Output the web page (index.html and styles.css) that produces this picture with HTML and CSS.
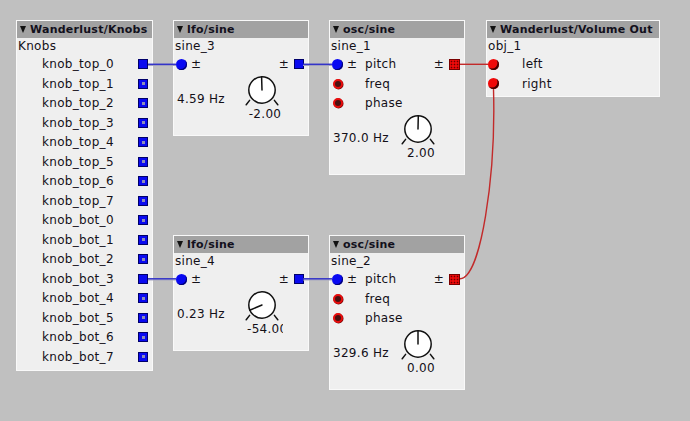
FILE: index.html
```html
<!DOCTYPE html>
<html>
<head>
<meta charset="utf-8">
<link rel="stylesheet" href="styles.css">
</head>
<body>
<div class="canvas">

  <div class="module m-knobs">
    <div class="header"><span class="tri"></span>Wanderlust/Knobs</div>
    <div class="name">Knobs</div>
    <div class="row orow"><span>knob_top_0</span><span class="sq blue"></span></div>
    <div class="row orow"><span>knob_top_1</span><span class="sq blue open"></span></div>
    <div class="row orow"><span>knob_top_2</span><span class="sq blue open"></span></div>
    <div class="row orow"><span>knob_top_3</span><span class="sq blue open"></span></div>
    <div class="row orow"><span>knob_top_4</span><span class="sq blue open"></span></div>
    <div class="row orow"><span>knob_top_5</span><span class="sq blue open"></span></div>
    <div class="row orow"><span>knob_top_6</span><span class="sq blue open"></span></div>
    <div class="row orow"><span>knob_top_7</span><span class="sq blue open"></span></div>
    <div class="row orow"><span>knob_bot_0</span><span class="sq blue open"></span></div>
    <div class="row orow"><span>knob_bot_1</span><span class="sq blue open"></span></div>
    <div class="row orow"><span>knob_bot_2</span><span class="sq blue open"></span></div>
    <div class="row orow"><span>knob_bot_3</span><span class="sq blue"></span></div>
    <div class="row orow"><span>knob_bot_4</span><span class="sq blue open"></span></div>
    <div class="row orow"><span>knob_bot_5</span><span class="sq blue open"></span></div>
    <div class="row orow"><span>knob_bot_6</span><span class="sq blue open"></span></div>
    <div class="row orow"><span>knob_bot_7</span><span class="sq blue open"></span></div>
  </div>

  <div class="module m-lfo1">
    <div class="header"><span class="tri"></span>lfo/sine</div>
    <div class="name">sine_3</div>
    <div class="row io">
      <span class="slot"><span class="dot blue"></span></span><span class="pm">±</span>
      <span class="lbl"></span>
      <span class="pm out">±</span><span class="sq blue"></span>
    </div>
    <div class="ctrl">
      <span class="clabel">4.59 Hz</span>
      <div class="kcol">
        <svg class="knob" width="30" height="32" viewBox="0 0 30 32">
          <line x1="2.6" y1="26.4" x2="-0.8" y2="30.8"/>
          <line x1="27.4" y1="26.4" x2="30.8" y2="30.8"/>
          <circle cx="15" cy="16" r="13.2"/>
          <line x1="15" y1="16" x2="14.6" y2="3"/>
        </svg>
        <div class="val">-2.00</div>
      </div>
    </div>
  </div>

  <div class="module m-osc1">
    <div class="header"><span class="tri"></span>osc/sine</div>
    <div class="name">sine_1</div>
    <div class="row io">
      <span class="slot"><span class="dot blue"></span></span><span class="pm">±</span>
      <span class="lbl">pitch</span>
      <span class="pm out">±</span><span class="sq red"></span>
    </div>
    <div class="row io">
      <span class="slot"><span class="ring"></span></span><span class="pm"></span>
      <span class="lbl">freq</span>
    </div>
    <div class="row io">
      <span class="slot"><span class="ring"></span></span><span class="pm"></span>
      <span class="lbl">phase</span>
    </div>
    <div class="ctrl">
      <span class="clabel">370.0 Hz</span>
      <div class="kcol">
        <svg class="knob" width="30" height="32" viewBox="0 0 30 32">
          <line x1="2.6" y1="26.4" x2="-0.8" y2="30.8"/>
          <line x1="27.4" y1="26.4" x2="30.8" y2="30.8"/>
          <circle cx="15" cy="16" r="13.2"/>
          <line x1="15" y1="16" x2="15.3" y2="3"/>
        </svg>
        <div class="val">2.00</div>
      </div>
    </div>
  </div>

  <div class="module m-vol">
    <div class="header"><span class="tri"></span>Wanderlust/Volume Out</div>
    <div class="name">obj_1</div>
    <div class="row vrow"><span class="vslot"><span class="dot red"></span></span><span>left</span></div>
    <div class="row vrow"><span class="vslot"><span class="dot red"></span></span><span>right</span></div>
  </div>

  <div class="module m-lfo2">
    <div class="header"><span class="tri"></span>lfo/sine</div>
    <div class="name">sine_4</div>
    <div class="row io">
      <span class="slot"><span class="dot blue"></span></span><span class="pm">±</span>
      <span class="lbl"></span>
      <span class="pm out">±</span><span class="sq blue"></span>
    </div>
    <div class="ctrl">
      <span class="clabel">0.23 Hz</span>
      <div class="kcol">
        <svg class="knob" width="30" height="32" viewBox="0 0 30 32">
          <line x1="2.6" y1="26.4" x2="-0.8" y2="30.8"/>
          <line x1="27.4" y1="26.4" x2="30.8" y2="30.8"/>
          <circle cx="15" cy="16" r="13.2"/>
          <line x1="15" y1="16" x2="2.8" y2="21.2"/>
        </svg>
        <div class="val clip">-54.00</div>
      </div>
    </div>
  </div>

  <div class="module m-osc2">
    <div class="header"><span class="tri"></span>osc/sine</div>
    <div class="name">sine_2</div>
    <div class="row io">
      <span class="slot"><span class="dot blue"></span></span><span class="pm">±</span>
      <span class="lbl">pitch</span>
      <span class="pm out">±</span><span class="sq red"></span>
    </div>
    <div class="row io">
      <span class="slot"><span class="ring"></span></span><span class="pm"></span>
      <span class="lbl">freq</span>
    </div>
    <div class="row io">
      <span class="slot"><span class="ring"></span></span><span class="pm"></span>
      <span class="lbl">phase</span>
    </div>
    <div class="ctrl">
      <span class="clabel">329.6 Hz</span>
      <div class="kcol">
        <svg class="knob" width="30" height="32" viewBox="0 0 30 32">
          <line x1="2.6" y1="26.4" x2="-0.8" y2="30.8"/>
          <line x1="27.4" y1="26.4" x2="30.8" y2="30.8"/>
          <circle cx="15" cy="16" r="13.2"/>
          <line x1="15" y1="16" x2="15" y2="3"/>
        </svg>
        <div class="val">0.00</div>
      </div>
    </div>
  </div>

  <svg class="wires" width="690" height="421" viewBox="0 0 690 421">
    <g class="shadow">
      <line x1="148" y1="65.5" x2="176" y2="65.5"/>
      <line x1="148" y1="280" x2="176" y2="280"/>
      <line x1="303" y1="65.5" x2="332" y2="65.5"/>
      <line x1="303" y1="280" x2="332" y2="280"/>
    </g>
    <g class="wb">
      <line x1="148" y1="64.3" x2="176" y2="64.3"/>
      <line x1="148" y1="278.8" x2="176" y2="278.8"/>
      <line x1="303" y1="64.3" x2="332" y2="64.3"/>
      <line x1="303" y1="278.8" x2="332" y2="278.8"/>
    </g>
    <g class="wr">
      <line x1="460" y1="64.3" x2="488" y2="64.3"/>
      <path d="M 460 278.8 C 481 278, 496 175, 493.5 89"/>
    </g>
  </svg>
</div>
</body>
</html>
```

FILE: styles.css
```css
html, body {
  margin: 0;
  padding: 0;
  background: #c0c0c0;
}

.canvas {
  position: relative;
  width: 690px;
  height: 421px;
  overflow: hidden;
  background: #c0c0c0;
  font-family: "DejaVu Sans", "Verdana", sans-serif;
  font-size: 12px;
  letter-spacing: 0.3px;
  color: #141018;
}

.module {
  position: absolute;
  box-sizing: border-box;
  background: #efefef;
  border: 1px solid #f9f9f9;
  display: flex;
  flex-direction: column;
}

.m-knobs { left: 16px; top: 20px; width: 137px; height: 351px; }
.m-lfo1  { left: 173px; top: 20px; width: 136px; height: 116px; }
.m-osc1  { left: 329px; top: 20px; width: 136px; height: 155px; }
.m-vol   { left: 486px; top: 20px; width: 174px; height: 77px; }
.m-lfo2  { left: 173px; top: 235px; width: 136px; height: 116px; }
.m-osc2  { left: 329px; top: 235px; width: 136px; height: 155px; }

.header {
  height: 17px;
  flex: none;
  background: #a2a2a2;
  display: flex;
  align-items: center;
  gap: 4px;
  padding-left: 3px;
  font-size: 11px;
  font-weight: bold;
  letter-spacing: 0.25px;
  color: #12101c;
  white-space: nowrap;
  overflow: hidden;
}

.tri {
  width: 0;
  height: 0;
  border-left: 3.5px solid transparent;
  border-right: 3.5px solid transparent;
  border-top: 7px solid #111;
  flex: none;
}

.name {
  height: 16.5px;
  line-height: 16.5px;
  flex: none;
  padding-left: 1px;
  white-space: nowrap;
}

.row {
  height: 19.5px;
  flex: none;
  display: flex;
  align-items: center;
  white-space: nowrap;
}

.orow {
  justify-content: space-between;
  padding-left: 25px;
  padding-right: 4px;
}

.io {
  padding-right: 4px;
}

.slot {
  width: 13px;
  padding-left: 2px;
  box-sizing: border-box;
  display: flex;
  align-items: center;
  flex: none;
}

.pm {
  width: 18px;
  margin-left: 4px;
  flex: none;
  line-height: 14px;
}

.pm.out {
  width: auto;
  margin-left: 0;
  margin-right: 5px;
}

.lbl {
  flex: 1;
}

.sq {
  width: 10px;
  height: 10px;
  box-sizing: border-box;
  flex: none;
  position: relative;
}

.sq.blue {
  background: #0a0af0;
  border: 1px solid #00006a;
}

.sq.blue.open::after {
  content: "";
  position: absolute;
  left: 2.5px;
  top: 2.5px;
  width: 3px;
  height: 3px;
  background: #8d8db8;
}

.sq.red {
  width: 11px;
  height: 11px;
  background-color: #ee0a0a;
  border: 1px solid #7a0000;
  background-image: radial-gradient(circle, #6a0000 0.7px, transparent 1.1px);
  background-size: 3px 3px;
  background-position: 0 0;
}

.dot {
  width: 11px;
  height: 11px;
  border-radius: 50%;
  box-sizing: border-box;
  flex: none;
}

.dot.blue {
  background: #0808f2;
  box-shadow: inset -1px -1px 0 #000070;
}

.dot.red {
  background: #f00808;
  box-shadow: inset -1.5px -1.5px 0 #400000;
}

.ring {
  width: 10px;
  height: 10px;
  margin-left: 0.5px;
  border-radius: 50%;
  box-sizing: border-box;
  border: 2.5px solid #e80c0c;
  background: #4a1010;
  box-shadow: 0.5px 0.5px 0 #700000;
  flex: none;
}

.vrow {
  padding-left: 1px;
}

.vslot {
  width: 34px;
  flex: none;
  display: flex;
  align-items: center;
}

.ctrl {
  display: flex;
  align-items: flex-start;
  padding-left: 3px;
}

.clabel {
  width: 70px;
  flex: none;
  padding-top: 18px;
  line-height: 14px;
  white-space: nowrap;
}

.kcol {
  width: 36px;
  flex: none;
  display: flex;
  flex-direction: column;
}

.knob {
  display: block;
  overflow: visible;
}

.knob circle {
  fill: #ffffff;
  stroke: #111;
  stroke-width: 1.5;
}

.knob line {
  stroke: #111;
  stroke-width: 1.5;
  stroke-linecap: round;
}

.val {
  width: 36px;
  line-height: 14px;
  margin-top: 1px;
  text-align: center;
  white-space: nowrap;
  overflow: hidden;
}

.val.clip {
  text-align: left;
}

.wires {
  position: absolute;
  left: 0;
  top: 0;
  pointer-events: none;
}

.wires line, .wires path {
  fill: none;
}

.shadow line {
  stroke: #a6a6bf;
  stroke-width: 1;
}

.wb line {
  stroke: #3434c8;
  stroke-width: 1.5;
}

.wr line, .wr path {
  stroke: #c22a2a;
  stroke-width: 1.4;
}
```
